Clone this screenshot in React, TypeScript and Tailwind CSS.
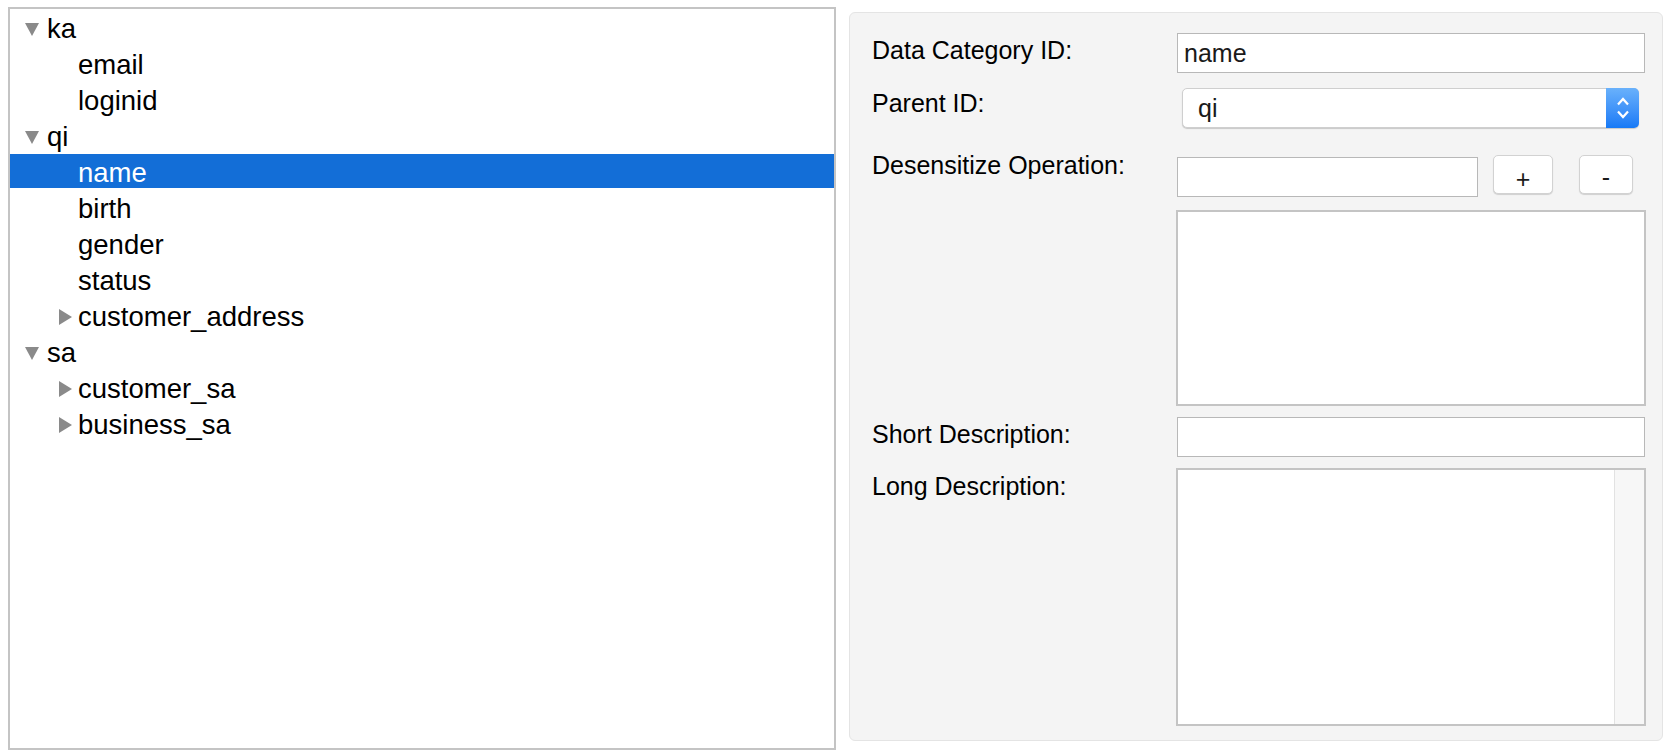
import React from "react";

type Row = { label: string; level: 0 | 1; toggle?: "open" | "closed"; selected?: boolean };

const rows: Row[] = [
  { label: "ka", level: 0, toggle: "open" },
  { label: "email", level: 1 },
  { label: "loginid", level: 1 },
  { label: "qi", level: 0, toggle: "open" },
  { label: "name", level: 1, selected: true },
  { label: "birth", level: 1 },
  { label: "gender", level: 1 },
  { label: "status", level: 1 },
  { label: "customer_address", level: 1, toggle: "closed" },
  { label: "sa", level: 0, toggle: "open" },
  { label: "customer_sa", level: 1, toggle: "closed" },
  { label: "business_sa", level: 1, toggle: "closed" },
];

function DownTri() {
  return (
    <svg width="14" height="13" viewBox="0 0 14 13">
      <polygon points="0,0 14,0 7,13" fill="#8a8a8a" />
    </svg>
  );
}

function RightTri() {
  return (
    <svg width="13" height="16" viewBox="0 0 13 16">
      <polygon points="0,0 13,8 0,16" fill="#8a8a8a" />
    </svg>
  );
}

function TreeRow({ r }: { r: Row }) {
  const pad = r.level === 0 ? "pl-[15px]" : r.toggle ? "pl-[49px]" : "pl-[68px]";
  const box = r.level === 0 ? "w-[22px] pt-[5px]" : "w-[19px] pt-[3px]";
  return (
    <div
      className={`flex items-center h-[34px] ${pad} ${
        r.selected ? "bg-[#136ed7] text-white" : "text-black"
      }`}
    >
      {r.toggle && (
        <div className={`${box} h-[34px] flex items-center`}>
          {r.toggle === "open" ? <DownTri /> : <RightTri />}
        </div>
      )}
      <span className="text-[27.5px] leading-[34px] pt-[3px]">{r.label}</span>
    </div>
  );
}

function Label({ children, cls }: { children: React.ReactNode; cls: string }) {
  return (
    <div className={`w-[305px] shrink-0 text-[25px] leading-[30px] text-black ${cls}`}>{children}</div>
  );
}

export default function App() {
  return (
    <div className="w-[1670px] h-[754px] bg-white flex items-start font-['Liberation_Sans',Arial,sans-serif]">
      {/* Tree panel */}
      <div className="ml-[8px] mt-[7px] w-[828px] h-[743px] border-2 border-[#c4c4c4] bg-white pt-[1px] flex flex-col gap-[2px]">
        {rows.map((r) => (
          <TreeRow key={r.label} r={r} />
        ))}
      </div>

      {/* Form panel */}
      <div className="ml-[13px] mt-[12px] w-[814px] h-[729px] rounded-[6px] border border-[#e4e4e4] bg-[#f4f4f4] pl-[22px] pt-[20px] flex flex-col">
        {/* Data Category ID */}
        <div className="flex items-start">
          <Label cls="mt-[2px]">Data Category ID:</Label>
          <div className="w-[468px] h-[40px] border border-[#b8b8b8] bg-white pl-[6px] text-[25px] leading-[38px] text-[#1a1a1a]">
            name
          </div>
        </div>

        {/* Parent ID */}
        <div className="flex items-start mt-[15px]">
          <Label cls="mt-[0px]">Parent ID:</Label>
          <div className="ml-[5px] w-[457px] h-[40px] rounded-[5px] bg-white border border-[#cfcfcf] shadow-[0_1px_1px_rgba(0,0,0,0.18)] flex items-stretch">
            <div className="flex-1 pl-[15px] text-[25px] leading-[38px] text-[#1a1a1a]">qi</div>
            <div className="w-[33px] -my-[1px] -mr-[1px] rounded-r-[5px] bg-gradient-to-b from-[#69b1fb] to-[#1579f6] flex flex-col items-center justify-center gap-[4px]">
              <svg width="14" height="9" viewBox="0 0 14 9">
                <polyline points="2,7.5 7,2 12,7.5" fill="none" stroke="white" strokeWidth="2.2" />
              </svg>
              <svg width="14" height="9" viewBox="0 0 14 9">
                <polyline points="2,1.5 7,7 12,1.5" fill="none" stroke="white" strokeWidth="2.2" />
              </svg>
            </div>
          </div>
        </div>

        {/* Desensitize Operation */}
        <div className="flex items-start mt-[27px]">
          <Label cls="-mt-[5px]">Desensitize Operation:</Label>
          <div className="mt-[2px] w-[301px] h-[40px] border border-[#b8b8b8] bg-white" />
          <button className="ml-[15px] w-[60px] h-[39px] rounded-[5px] bg-white border border-[#d2d2d2] shadow-[0_1px_1px_rgba(0,0,0,0.15)] text-[25px] leading-[37px] pt-[5px] text-[#1a1a1a]">
            +
          </button>
          <button className="ml-[26px] w-[54px] h-[39px] rounded-[5px] bg-white border border-[#d2d2d2] shadow-[0_1px_1px_rgba(0,0,0,0.15)] text-[25px] leading-[37px] pt-[3px] text-[#1a1a1a]">
            -
          </button>
        </div>

        {/* List */}
        <div className="flex items-start mt-[13px]">
          <div className="w-[304px] shrink-0" />
          <div className="w-[470px] h-[196px] border-2 border-[#c4c4c4] bg-white" />
        </div>

        {/* Short Description */}
        <div className="flex items-start mt-[11px]">
          <Label cls="mt-[2px]">Short Description:</Label>
          <div className="w-[468px] h-[40px] border border-[#b8b8b8] bg-white" />
        </div>

        {/* Long Description */}
        <div className="flex items-start mt-[11px]">
          <Label cls="mt-[3px]">Long Description:</Label>
          <div className="-ml-[1px] w-[470px] h-[258px] border-2 border-[#c4c4c4] bg-white flex justify-end">
            <div className="w-[30px] h-full border-l border-[#e2e2e2] bg-[#f7f7f7]" />
          </div>
        </div>
      </div>
    </div>
  );
}
